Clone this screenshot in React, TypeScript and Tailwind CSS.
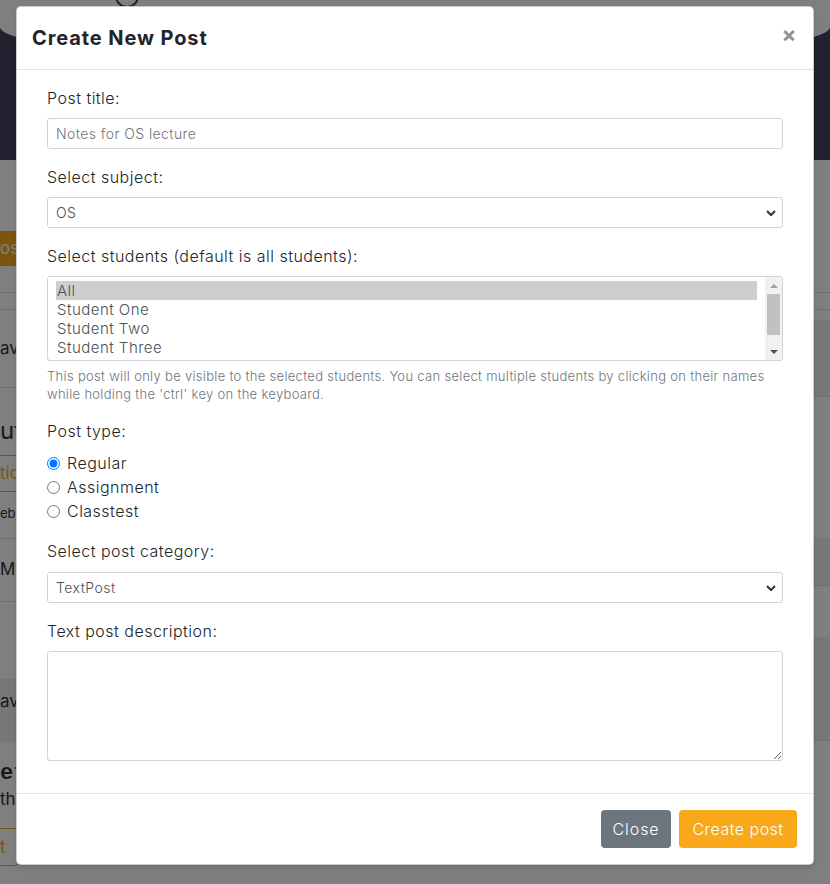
import React from "react";

const font = { fontFamily: "Inter, 'Open Sans', sans-serif" };

function Chevron() {
  return (
    <svg width="10" height="6" viewBox="0 0 10 6" className="shrink-0">
      <path d="M1 1l4 4 4-4" fill="none" stroke="#343a40" strokeWidth="2.2" />
    </svg>
  );
}

function Field({ label, children, gap = "mb-2" }: { label: string; children: React.ReactNode; gap?: string }) {
  return (
    <div className="mb-4">
      <label className={"block text-base font-light leading-6 text-[#212529] " + gap}>{label}</label>
      {children}
    </div>
  );
}

function SelectBox({ value }: { value: string }) {
  return (
    <div className="flex h-[31px] items-center justify-between rounded-[3px] border border-[#ced4da] bg-white pl-2 pr-[6px] text-sm font-light text-[#495057]">
      <span>{value}</span>
      <Chevron />
    </div>
  );
}

function StudentList() {
  const students = ["All", "Student One", "Student Two", "Student Three", "Student Four"];
  return (
    <div className="flex h-[85px] overflow-hidden rounded-[3px] border border-[#ced4da] bg-white">
      <div className="flex-1 overflow-hidden px-2 pt-1">
        {students.map((s, i) => (
          <div
            key={s}
            className={
              "h-[19px] pl-px text-[15px] font-light leading-[19px] text-[#495057] " +
              (i === 0 ? "bg-[#cecece] text-[#212529]" : "")
            }
          >
            {s}
          </div>
        ))}
      </div>
      {/* fake scrollbar */}
      <div className="flex w-[17px] flex-col items-center bg-[#f1f1f1]">
        <div className="flex h-[17px] items-center justify-center">
          <div className="h-0 w-0 border-x-[4px] border-b-[4px] border-x-transparent border-b-[#a3a3a3]" />
        </div>
        <div className="h-[41px] w-[13px] bg-[#c1c1c1]" />
        <div className="flex-1" />
        <div className="flex h-[17px] items-center justify-center">
          <div className="h-0 w-0 border-x-[4px] border-t-[4px] border-x-transparent border-t-[#505050]" />
        </div>
      </div>
    </div>
  );
}

function Radio({ label, checked }: { label: string; checked?: boolean }) {
  return (
    <label className="flex h-6 items-center gap-[7px] text-base font-light text-[#212529]">
      <input type="radio" name="ptype" defaultChecked={checked} className="m-0 h-[13px] w-[13px]" />
      {label}
    </label>
  );
}

function BackgroundPage() {
  return (
    <div className="min-h-[884px] bg-white text-[#333]">
      {/* hero */}
      <div className="h-[160px] bg-[#42425e]">
        <div className="flex h-[63px] rounded-b-[415px_36px] bg-white pl-[115px]">
          <div className="-mt-[16px] h-6 w-6 rounded-full border-2 border-[#444]" />
        </div>
      </div>
      <div className="flex">
        <div className="flex-1">
          <div className="h-[71px]" />
          <div className="h-[35px] w-[120px] bg-[#f9a81a] text-[17px] leading-[35px] text-white">ost</div>
          <div className="h-[27px] border-b border-[#ddd]" />
          <div className="h-[17px] border-b border-[#ddd]" />
          <div className="flex h-[78px] items-center border-b border-[#ddd] text-[17px]">av</div>
          <div className="flex h-[67px] items-end pb-[12px] text-[24px] leading-6">ut</div>
          <div className="h-[37px] w-[120px] border-y border-[#f9a81a] text-[17px] leading-[35px] text-[#f9a81a]">tic</div>
          <div className="flex h-[47px] items-start border-b border-[#ddd] pt-[12px] text-[13px]">eb</div>
          <div className="flex h-[63px] items-center border-b border-[#ddd] text-[17px]">ME</div>
          <div className="h-[77px]" />
          <div className="flex h-[63px] items-start bg-[#eee] pt-[10px] text-[17px]">av</div>
          <div className="h-[20px]" />
          <div className="font-mono text-[22px] font-bold leading-6">eta</div>
          <div className="mt-[1px] text-[17px] leading-6">th</div>
          <div className="h-[17px]" />
          <div className="h-[38px] w-[19px] rounded-r-[4px] border border-l-0 border-[#f9a81a] text-[17px] leading-[36px] text-[#f9a81a]">t</div>
        </div>
        <div className="flex-1">
          <div className="h-[133px] border-b border-[#ddd]" />
          <div className="h-[17px] border-b border-[#ddd]" />
          <div className="h-[10px]" />
          <div className="h-[77px] border-b border-[#ddd] bg-[#eee]" />
          <div className="h-[141px]" />
          <div className="h-[48px] border-b border-[#ddd] bg-[#eee]" />
          <div className="h-[51px]" />
          <div className="h-[104px] border-b border-[#ddd] bg-[#eee]" />
        </div>
      </div>
    </div>
  );
}

export default function App() {
  return (
    <div className="relative h-[884px] w-[830px] overflow-hidden" style={font}>
      <BackgroundPage />

      {/* Modal backdrop + dialog */}
      <div className="absolute inset-0 bg-black/50 px-4 pt-[6px]">
        <div className="rounded-[5px] border border-black/20 bg-white tracking-[0.03em] shadow-md">
          {/* Header */}
          <div className="flex items-start justify-between border-b border-[#dee2e6] py-4 pl-[15px] pr-4">
            <h5 className="text-[20px] font-bold leading-[30px] tracking-[0.045em] text-[#212529]">Create New Post</h5>
            <button className="-mt-[4px] text-[22px] font-bold leading-[30px] text-[#212529] opacity-50">×</button>
          </div>

          {/* Body */}
          <div className="px-[30px] py-4">
            <Field label="Post title:">
              <input
                className="block h-[31px] w-full rounded-[3px] border border-[#ced4da] px-2 text-sm font-light tracking-[0.03em] text-[#495057] placeholder:text-[#6c757d]"
                placeholder="Notes for OS lecture"
              />
            </Field>

            <Field label="Select subject:">
              <SelectBox value="OS" />
            </Field>

            <div className="mb-4">
              <label className="mb-2 block text-base font-light leading-6 text-[#212529]">
                Select students (default is all students):
              </label>
              <StudentList />
              <p className="mt-[6px] text-[13px] font-light leading-[18px] tracking-[0.024em] text-[#6c757d]">
                This post will only be visible to the selected students. You can select multiple students by clicking on their names while holding the 'ctrl' key on the keyboard.
              </p>
            </div>

            <div className="mb-4">
              <label className="mb-2 mt-px block text-base font-light leading-6 text-[#212529]">Post type:</label>
              <Radio label="Regular" checked />
              <Radio label="Assignment" />
              <Radio label="Classtest" />
            </div>

            <Field label="Select post category:" gap="mb-[9px]">
              <SelectBox value="TextPost" />
            </Field>

            <Field label="Text post description:">
              <textarea className="block h-[110px] w-full rounded-[3px] border border-[#ced4da] px-2 py-1 text-sm" />
            </Field>
          </div>

          {/* Footer */}
          <div className="flex justify-end gap-2 border-t border-[#dee2e6] p-4">
            <button className="h-[38px] w-[70px] rounded-[4px] bg-[#6c757d] text-base font-light tracking-[0.06em] text-white">Close</button>
            <button className="h-[38px] w-[118px] rounded-[4px] bg-[#f9a81a] text-base font-light text-white">Create post</button>
          </div>
        </div>
      </div>
    </div>
  );
}
